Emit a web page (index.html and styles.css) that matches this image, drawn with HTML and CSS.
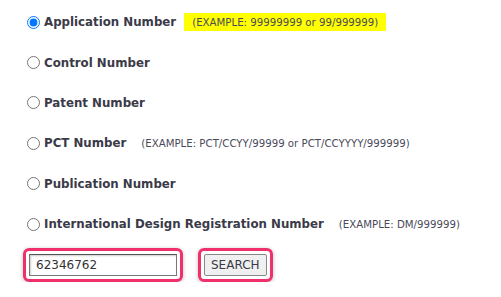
FILE: index.html
```html
<!DOCTYPE html>
<html lang="en">
<head>
  <meta charset="UTF-8">
  <title>Search</title>
  <link rel="stylesheet" href="styles.css">
</head>
<body>
  <form class="search-form">
    <div class="option">
      <input type="radio" id="appl" name="type" checked>
      <label for="appl">Application Number</label>
      <span class="example highlight">(EXAMPLE: 99999999 or 99/999999)</span>
    </div>
    <div class="option">
      <input type="radio" id="control" name="type">
      <label for="control">Control Number</label>
    </div>
    <div class="option">
      <input type="radio" id="patent" name="type">
      <label for="patent">Patent Number</label>
    </div>
    <div class="option">
      <input type="radio" id="pct" name="type">
      <label for="pct">PCT Number</label>
      <span class="example">(EXAMPLE: PCT/CCYY/99999 or PCT/CCYYYY/999999)</span>
    </div>
    <div class="option">
      <input type="radio" id="pub" name="type">
      <label for="pub">Publication Number</label>
    </div>
    <div class="option">
      <input type="radio" id="design" name="type">
      <label for="design">International Design Registration Number</label>
      <span class="example">(EXAMPLE: DM/999999)</span>
    </div>

    <div class="search-row">
      <div class="mark">
        <input type="text" class="number" value="62346762">
      </div>
      <div class="mark">
        <button type="submit">SEARCH</button>
      </div>
    </div>
  </form>
</body>
</html>
```

FILE: styles.css
```css
body {
  margin: 0;
  background: #ffffff;
  font-family: "DejaVu Sans", Verdana, sans-serif;
  color: #3a3a48;
}
.search-form {
  padding: 2px 0 0 27px;
}
.option {
  display: flex;
  align-items: center;
  height: 40.4px;
}
.option input {
  margin: 0 4px 0 0;
  width: 13px;
  height: 13px;
}
.option label {
  font-weight: bold;
  font-size: 11.8px;
}
.example {
  font-size: 10.2px;
  color: #4a4a5a;
  margin-left: 15px;
}
.highlight {
  background: #ffff00;
  margin-left: 8px;
  padding: 4px 8px 3px 8px;
}
.search-row {
  display: flex;
  gap: 15px;
  margin: 4px 0 0 -4px;
}
.mark {
  border: 3px solid #f0306a;
  border-radius: 6px;
  padding: 3px;
  box-shadow: 0 1px 4px rgba(0, 0, 0, 0.25);
}
.number {
  display: block;
  width: 136px;
  height: 18px;
  margin: 0;
  padding: 1px 4px 1px 6px;
  font-family: "DejaVu Sans", Verdana, sans-serif;
  font-size: 12px;
  color: #333;
  border: 1px solid #777;
  border-top-color: #555;
  box-shadow: inset 1px 1px 2px rgba(0, 0, 0, 0.2);
}
button {
  display: block;
  height: 22px;
  padding: 0 6px;
  font-family: "DejaVu Sans", Verdana, sans-serif;
  font-size: 12px;
  color: #3a3a48;
  background: #f0f0f0;
  border: 1px solid #888;
  border-radius: 2px;
}
```
